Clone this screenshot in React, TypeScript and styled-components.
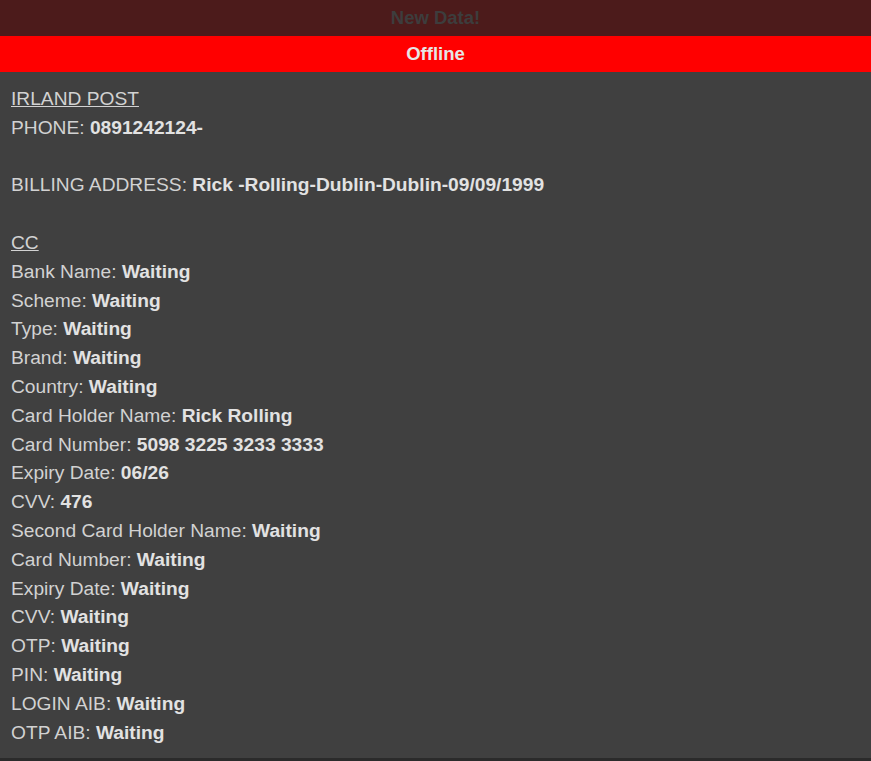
import styled, { createGlobalStyle } from "styled-components";

const GlobalStyle = createGlobalStyle`
  html, body {
    margin: 0;
    padding: 0;
    background: #2b2b2b;
    font-family: "Liberation Sans", Arial, sans-serif;
  }
`;

const Banner = styled.div<{ $bg: string; $fg: string }>`
  height: 36px;
  display: flex;
  align-items: center;
  justify-content: center;
  background: ${(p) => p.$bg};
  color: ${(p) => p.$fg};
  font-weight: bold;
  font-size: 18.5px;
`;

const Panel = styled.div`
  background: #404040;
  padding: 13px 11px 11px;
  color: #d2d2d2;
  font-size: 19.2px;
  line-height: 28.8px;
`;

const Line = styled.div`
  min-height: 28.8px;
  white-space: nowrap;
`;

const Heading = styled(Line)`
  text-decoration: underline;
`;

const Value = styled.b`
  color: #e2e2e2;
`;

const fields: [string, string][] = [
  ["Bank Name", "Waiting"],
  ["Scheme", "Waiting"],
  ["Type", "Waiting"],
  ["Brand", "Waiting"],
  ["Country", "Waiting"],
  ["Card Holder Name", "Rick Rolling"],
  ["Card Number", "5098 3225 3233 3333"],
  ["Expiry Date", "06/26"],
  ["CVV", "476"],
  ["Second Card Holder Name", "Waiting"],
  ["Card Number", "Waiting"],
  ["Expiry Date", "Waiting"],
  ["CVV", "Waiting"],
  ["OTP", "Waiting"],
  ["PIN", "Waiting"],
  ["LOGIN AIB", "Waiting"],
  ["OTP AIB", "Waiting"],
];

const Field = ({ label, value }: { label: string; value: string }) => (
  <Line>
    {label}: <Value>{value}</Value>
  </Line>
);

export default function App() {
  return (
    <>
      <GlobalStyle />
      <Banner $bg="#4c1b1b" $fg="#3d3d3d">New Data!</Banner>
      <Banner $bg="#ff0000" $fg="#e6e6e6">Offline</Banner>
      <Panel>
        <Heading>IRLAND POST</Heading>
        <Field label="PHONE" value="0891242124-" />
        <Line />
        <Field label="BILLING ADDRESS" value="Rick -Rolling-Dublin-Dublin-09/09/1999" />
        <Line />
        <Heading>CC</Heading>
        {fields.map(([l, v], i) => (
          <Field key={i} label={l} value={v} />
        ))}
      </Panel>
    </>
  );
}
